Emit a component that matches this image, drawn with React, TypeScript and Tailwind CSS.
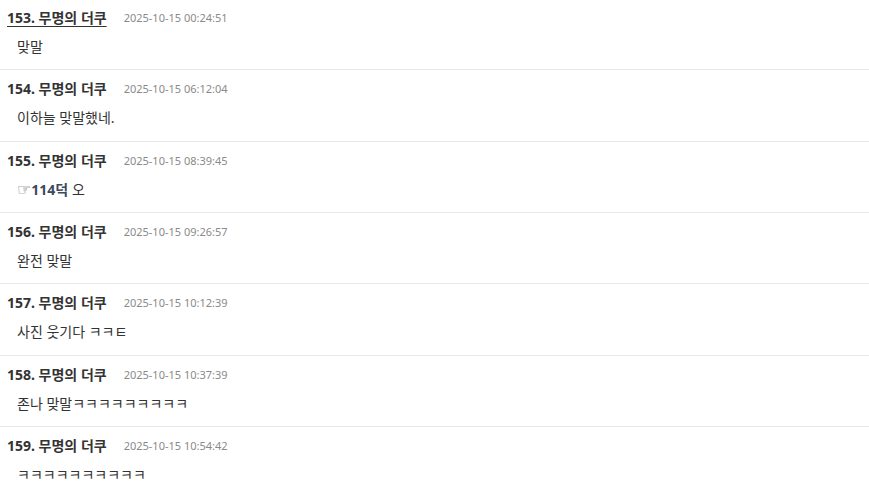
import React from "react";

const comments = [
  { no: 153, date: "2025-10-15 00:24:51", body: "맞말", active: true },
  { no: 154, date: "2025-10-15 06:12:04", body: "이하늘 맞말했네." },
  { no: 155, date: "2025-10-15 08:39:45", body: "", anchor: "114덕", rest: " 오" },
  { no: 156, date: "2025-10-15 09:26:57", body: "완전 맞말" },
  { no: 157, date: "2025-10-15 10:12:39", body: "사진 웃기다 ㅋㅋㅌ" },
  { no: 158, date: "2025-10-15 10:37:39", body: "존나 맞말ㅋㅋㅋㅋㅋㅋㅋㅋㅋ" },
  { no: 159, date: "2025-10-15 10:54:42", body: "ㅋㅋㅋㅋㅋㅋㅋㅋㅋㅋ" },
];

export default function App() {
  return (
    <div
      className="w-[869px] h-[494px] overflow-hidden bg-white text-[#333]"
      style={{ fontFamily: '"Noto Sans", "Noto Sans CJK KR", sans-serif' }}
    >
      <ul className="-mt-[1px]">
        {comments.map((c) => (
          <li key={c.no} className="border-b border-[#e8e8e8] pt-[9px] pb-[12.33px]">
            <div className="flex items-center h-[20px] pl-[7px]">
              <span
                className={
                  "text-[14px] font-bold text-[#333] leading-[20px] " +
                  (c.active ? "underline underline-offset-[3px]" : "")
                }
              >
                {c.no}. 무명의 더쿠
              </span>
              <span className="ml-[17px] text-[11px] text-[#8a8a8a] leading-[20px]">{c.date}</span>
            </div>
            <div className="mt-[9px] h-[20px] pl-[17px] text-[14px] leading-[20px] text-[#333]">
              {c.anchor ? (
                <>
                  <span className="font-bold text-[#3b4a5c]">
                    <span
                      style={{ fontFamily: '"DejaVu Sans", sans-serif' }}
                      className="font-normal text-[16px] leading-[20px] text-[#4a5666]"
                    >
                      ☞
                    </span>
                    {c.anchor}
                  </span>
                  {c.rest}
                </>
              ) : (
                c.body
              )}
            </div>
          </li>
        ))}
      </ul>
    </div>
  );
}
